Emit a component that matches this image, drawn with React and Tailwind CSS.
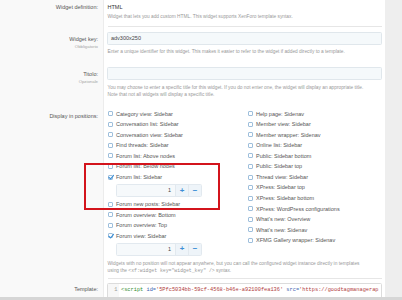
import React from "react";

const font = { fontFamily: '"Liberation Sans", Arial, sans-serif' };

function Box({ checked }) {
  return (
    <span className="relative shrink-0 w-[5px] h-[5px] border-[0.8px] border-[#9ebfdc] rounded-[1px] bg-white">
      {checked && (
        <svg viewBox="0 0 10 10" className="absolute left-[-1px] top-[-1.5px] w-[6.5px] h-[6.5px]">
          <path d="M1.5 5.2 L4 7.6 L8.8 2" fill="none" stroke="#3d8fd6" strokeWidth="1.8" strokeLinecap="round" strokeLinejoin="round" />
        </svg>
      )}
    </span>
  );
}

function Opt({ label, checked }) {
  return (
    <div className="flex items-center h-[10.55px] gap-[3.5px] text-[5.5px] text-[#555] whitespace-nowrap">
      <Box checked={checked} />
      <span>{label}</span>
    </div>
  );
}

function NumBox() {
  return (
    <div className="ml-[8.5px] flex w-[86px] h-[13.5px] my-[1.5px] border-[0.8px] border-[#e2e9ef] rounded-[1.5px] text-[5.5px]">
      <div className="flex-1 bg-[#f6f9fb] flex items-center justify-end pr-[4px] text-[#444]">1</div>
      <div className="w-[13px] bg-[#eef4f9] border-l-[0.8px] border-[#e2e9ef] flex items-center justify-center text-[#3d8fd6] text-[8px] font-bold leading-none">+</div>
      <div className="w-[13px] bg-[#eef4f9] border-l-[0.8px] border-[#e2e9ef] flex items-center justify-center text-[#3d8fd6] text-[8px] font-bold leading-none">−</div>
    </div>
  );
}

function Label({ children, sub, pt }) {
  return (
    <div className={`w-[103px] shrink-0 bg-[#f9f9f9] text-right pr-[5px] ${pt}`}>
      <div className="text-[5.5px] leading-[7px] text-[#555]">{children}</div>
      {sub && <div className="text-[4.3px] leading-[6px] mt-[1px] text-[#a5a5a5]">{sub}</div>}
    </div>
  );
}

export default function App() {
  const left = [
    ["Category view: Sidebar"],
    ["Conversation list: Sidebar"],
    ["Conversation view: Sidebar"],
    ["Find threads: Sidebar"],
    ["Forum list: Above nodes"],
    ["Forum list: Below nodes"],
    ["Forum list: Sidebar", true, true],
    ["Forum new posts: Sidebar"],
    ["Forum overview: Bottom"],
    ["Forum overview: Top"],
    ["Forum view: Sidebar", true, true],
  ];
  const right = [
    "Help page: Sidenav",
    "Member view: Sidebar",
    "Member wrapper: Sidenav",
    "Online list: Sidebar",
    "Public: Sidebar bottom",
    "Public: Sidebar top",
    "Thread view: Sidebar",
    "XPress: Sidebar top",
    "XPress: Sidebar bottom",
    "XPress: WordPress configurations",
    "What's new: Overview",
    "What's new: Sidenav",
    "XFMG Gallery wrapper: Sidenav",
  ];
  return (
    <div className="relative w-[402px] h-[300px] overflow-hidden flex flex-col bg-[#eeeeee]" style={font}>
      <div className="flex-1 flex overflow-hidden">
        <div className="w-[385px] shrink-0 flex flex-col bg-white">
          {/* Row 1 */}
          <div className="flex">
            <Label pt="pt-[4px]">Widget definition:</Label>
            <div className="flex-1 border-l-[0.8px] border-[#ececec] px-[3.5px]">
              <div className="pt-[4px] pb-[6px] border-b-[0.8px] border-[#e6e6e6]">
                <div className="text-[5.5px] leading-[7px] text-[#333]">HTML</div>
                <div className="mt-[3px] text-[4.8px] leading-[6px] text-[#999] whitespace-nowrap">
                  Widget that lets you add custom HTML. This widget supports XenForo template syntax.
                </div>
              </div>
            </div>
          </div>
          {/* Row 2 */}
          <div className="flex">
            <Label pt="pt-[8.5px]" sub="Obbligatorio">Widget key:</Label>
            <div className="flex-1 border-l-[0.8px] border-[#ececec] px-[3px] pt-[5px] pb-[6px]">
              <div className="h-[13px] w-[275px] bg-[#f5f9fb] border-[0.8px] border-[#e0e7ec] rounded-[1.5px] flex items-center pl-[3px] text-[5.5px] text-[#444]">
                adv300x250
              </div>
              <div className="mt-[4px] text-[4.8px] leading-[6px] text-[#999] whitespace-nowrap pl-[0.5px]">
                Enter a unique identifier for this widget. This makes it easier to refer to the widget if added directly to a template.
              </div>
            </div>
          </div>
          {/* Row 3 */}
          <div className="flex">
            <Label pt="pt-[9.5px]" sub="Opzionale">Titolo:</Label>
            <div className="flex-1 border-l-[0.8px] border-[#ececec] px-[3px] pt-[6px] pb-[5px]">
              <div className="h-[13px] w-[275px] bg-[#f5f9fb] border-[0.8px] border-[#e0e7ec] rounded-[1.5px]" />
              <div className="mt-[4px] text-[4.8px] leading-[7px] text-[#999] whitespace-nowrap pl-[0.5px]">
                <div>You may choose to enter a specific title for this widget. If you do not enter one, the widget will display an appropriate title.</div>
                <div>Note that not all widgets will display a specific title.</div>
              </div>
            </div>
          </div>
          {/* Row 4 */}
          <div className="flex">
            <Label pt="pt-[9.5px]">Display in positions:</Label>
            <div className="flex-1 border-l-[0.8px] border-[#ececec] px-[3.5px] pt-[5.5px]">
              <div className="pb-[4px] border-b-[0.8px] border-[#e6e6e6]">
                <div className="flex">
                  <div className="w-[140px] flex flex-col">
                    {left.map(([l, c, n]) => (
                      <React.Fragment key={l}>
                        <Opt label={l} checked={c} />
                        {n && <NumBox />}
                      </React.Fragment>
                    ))}
                  </div>
                  <div className="flex-1 flex flex-col">
                    {right.map((l) => (
                      <Opt key={l} label={l} />
                    ))}
                  </div>
                </div>
                <div className="mt-[2.5px] text-[4.8px] leading-[7px] text-[#999] whitespace-nowrap">
                  <div>Widgets with no position will not appear anywhere, but you can call the configured widget instance directly in templates</div>
                  <div>
                    using the <span style={{ fontFamily: '"Liberation Mono", monospace' }}>&lt;xf:widget key="widget_key" /&gt;</span> syntax.
                  </div>
                </div>
              </div>
            </div>
          </div>
          {/* Row 5 */}
          <div className="flex flex-1">
            <Label pt="pt-[7px]">Template:</Label>
            <div className="flex-1 border-l-[0.8px] border-[#ececec] px-[3px] pt-[4px]">
              <div className="h-[30px] w-[275px] border-[0.8px] border-[#dcdcdc] rounded-[1.5px] flex overflow-hidden">
                <div className="w-[11px] shrink-0 bg-[#f7f7f7] text-right pr-[1.5px] pt-[2.5px] text-[5.3px] leading-[7px] text-[#999]" style={{ fontFamily: '"Liberation Mono", monospace' }}>1</div>
                <div className="pl-[2px] pt-[2.5px] text-[5.3px] leading-[7px] whitespace-nowrap" style={{ fontFamily: '"Liberation Mono", monospace' }}>
                  <span className="text-[#2e8b2e]">&lt;script</span>{" "}
                  <span className="text-[#3a5fb0]">id=</span>
                  <span className="text-[#b03a3a]">'5Pfc5034bb-59cf-4568-b46e-a92100fea136'</span>{" "}
                  <span className="text-[#3a5fb0]">src=</span>
                  <span className="text-[#b03a3a]">'https://goodtagmanagerap</span>
                </div>
              </div>
            </div>
          </div>
        </div>
        <div className="flex-1 bg-[#eeeeee]" />
      </div>
      <div className="h-[3px] bg-[#d6d6d6]" />
      <div className="absolute left-[83.5px] top-[163px] w-[136px] h-[47px] border-2 border-[#d3141c]" />
    </div>
  );
}
